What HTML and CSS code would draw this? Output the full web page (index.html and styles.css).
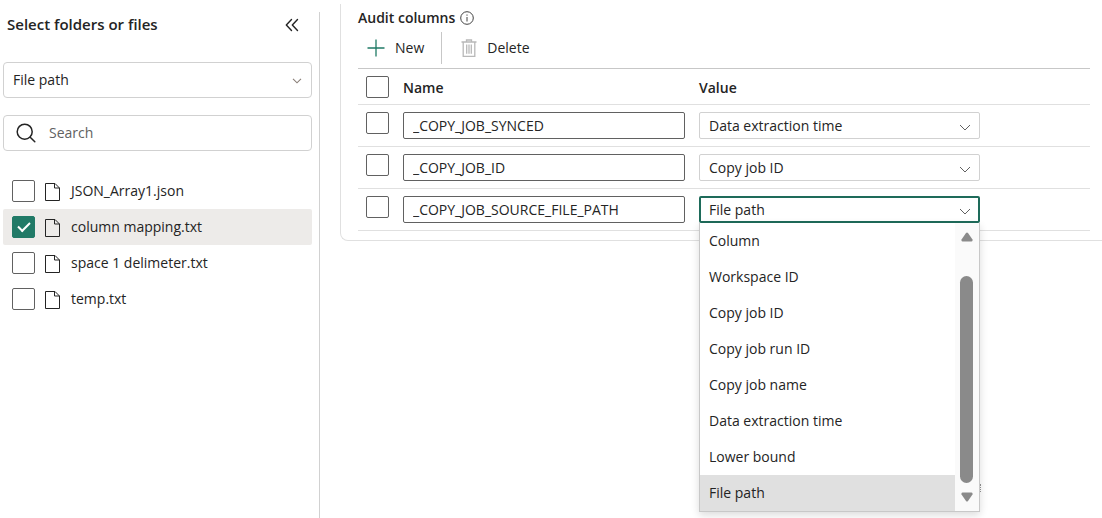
FILE: index.html
```html
<!DOCTYPE html>
<html lang="en">
<head>
<meta charset="utf-8">
<title>Copy job</title>
<link rel="stylesheet" href="styles.css">
</head>
<body>
<div class="layout">
  <aside class="sidebar">
    <header class="sidebar-head">
      <h2 class="title title-large">Select folders or files</h2>
      <button class="icon-button" type="button" aria-label="Collapse">
        <svg width="14" height="14" viewBox="0 0 14 14" fill="none" stroke="#242424" stroke-width="1.4" stroke-linecap="round" stroke-linejoin="round"><path d="M6.500 1.500 1.300 7l5.200 5.500M12.500 1.500 7.300 7l5.200 5.500"/></svg>
      </button>
    </header>
    <div class="field">
      <select class="field-control" aria-label="Path type"><option>File path</option></select>
      <svg class="chevron chevron-small" width="10" height="6" viewBox="0 0 10 6" fill="none" stroke="#8a7f78" stroke-width="1.1"><path d="M1 .8 5 4.800 9 .8"/></svg>
    </div>
    <div class="field search">
      <svg width="20" height="20" viewBox="0 0 20 20" fill="none" stroke="#242424" stroke-width="1.500" stroke-linecap="round"><circle cx="8.700" cy="8.700" r="7.500"/><path d="m14.200 14.200 4.600 4.600"/></svg>
      <input class="search-input" type="text" placeholder="Search" aria-label="Search">
    </div>
    <ul class="files">
      <li><label class="file"><input class="check" type="checkbox"><svg class="file-icon" width="15" height="18" viewBox="0 0 15 18" fill="#fff" stroke="#242424"><path d="M.5.5h9.500l4.500 4.500v12.500H.5z"/><path d="M9.500.5v4.500h5" fill="none"/></svg><span>JSON_Array1.json</span></label></li>
      <li><label class="file selected"><input class="check" type="checkbox" checked><svg class="file-icon" width="15" height="18" viewBox="0 0 15 18" fill="none" stroke="#242424"><path d="M.5.5h9.500l4.500 4.500v12.500H.5z"/><path d="M9.500.5v4.500h5"/></svg><span>column mapping.txt</span></label></li>
      <li><label class="file"><input class="check" type="checkbox"><svg class="file-icon" width="15" height="18" viewBox="0 0 15 18" fill="#fff" stroke="#242424"><path d="M.5.5h9.500l4.500 4.500v12.500H.5z"/><path d="M9.500.5v4.500h5" fill="none"/></svg><span>space 1 delimeter.txt</span></label></li>
      <li><label class="file"><input class="check" type="checkbox"><svg class="file-icon" width="15" height="18" viewBox="0 0 15 18" fill="#fff" stroke="#242424"><path d="M.5.5h9.500l4.500 4.500v12.500H.5z"/><path d="M9.500.5v4.500h5" fill="none"/></svg><span>temp.txt</span></label></li>
    </ul>
  </aside>
  <main class="main">
    <section class="panel">
      <div class="panel-head">
        <h2 class="title">Audit columns</h2>
        <svg width="14" height="14" viewBox="0 0 14 14" fill="none" stroke="#424242"><circle cx="7" cy="7" r="6.300"/><path d="M7 6v4.500M7 3.500v1.200"/></svg>
      </div>
      <div class="toolbar">
        <button class="tool tool-new" type="button">
          <svg width="18" height="18" viewBox="0 0 18 18" fill="none" stroke="#1f7a65" stroke-width="1.300"><path d="M9 .5v17M.5 9h17"/></svg>New
        </button>
        <button class="tool tool-delete" type="button">
          <svg width="16" height="18" viewBox="0 0 16 18" fill="none" stroke="#b8b8b8" stroke-width="1.300"><path d="M.5 3h15M5.500 3V1h5v2M2.200 3v14.300h11.600V3M5.700 5.500v9.300M8 5.500v9.300M10.300 5.500v9.300"/></svg>Delete
        </button>
      </div>
      <table class="grid">
        <thead>
          <tr><th class="col-check"><input class="check" type="checkbox" aria-label="Select all"></th><th class="col-name">Name</th><th>Value</th></tr>
        </thead>
        <tbody>
          <tr>
            <td><input class="check" type="checkbox" aria-label="Select row 1"></td>
            <td><input class="name" type="text" value="_COPY_JOB_SYNCED" aria-label="Name 1"></td>
            <td><div class="combo"><select class="value" aria-label="Value 1"><option>Data extraction time</option></select><svg class="chevron" width="12" height="7" viewBox="0 0 12 7" fill="none" stroke="#616161"><path d="M1 1l5 5 5-5"/></svg></div></td>
          </tr>
          <tr>
            <td><input class="check" type="checkbox" aria-label="Select row 2"></td>
            <td><input class="name" type="text" value="_COPY_JOB_ID" aria-label="Name 2"></td>
            <td><div class="combo"><select class="value" aria-label="Value 2"><option>Copy job ID</option></select><svg class="chevron" width="12" height="7" viewBox="0 0 12 7" fill="none" stroke="#616161"><path d="M1 1l5 5 5-5"/></svg></div></td>
          </tr>
          <tr>
            <td><input class="check" type="checkbox" aria-label="Select row 3"></td>
            <td><input class="name" type="text" value="_COPY_JOB_SOURCE_FILE_PATH" aria-label="Name 3"></td>
            <td>
              <div class="combo">
                <select class="value open" aria-label="Value 3"><option>File path</option></select><svg class="chevron" width="12" height="7" viewBox="0 0 12 7" fill="none" stroke="#616161"><path d="M1 1l5 5 5-5"/></svg>
                <div class="menu">
                  <ul class="options" role="listbox" aria-label="Value options">
                    <li role="option">Column</li>
                    <li role="option">Workspace ID</li>
                    <li role="option">Copy job ID</li>
                    <li role="option">Copy job run ID</li>
                    <li role="option">Copy job name</li>
                    <li role="option">Data extraction time</li>
                    <li role="option">Lower bound</li>
                    <li role="option" class="current" aria-selected="true">File path</li>
                  </ul>
                  <div class="scrollbar">
                    <svg width="12" height="10" viewBox="0 0 12 10" fill="#8a8a8a"><path d="M5 1.100Q6 0 7 1.100L11.500 7.500Q12 9.500 10.500 9.500H1.500Q0 9.500.5 7.500z"/></svg>
                    <div class="thumb"></div>
                    <svg width="12" height="10" viewBox="0 0 12 10" fill="#8a8a8a"><path d="M5 8.900Q6 10 7 8.900L11.500 2.500Q12 .5 10.500.5H1.500Q0 .5.5 2.500z"/></svg>
                  </div>
                </div>
              </div>
            </td>
          </tr>
        </tbody>
      </table>
    </section>
  </main>
</div>
</body>
</html>
```

FILE: styles.css
```css
* { box-sizing: border-box; }
body {
  margin: 0;
  background: #fff;
  color: #242424;
  font: 14px/20px "Open Sans", "Noto Sans", sans-serif;
}
input, select, button { font: inherit; color: inherit; margin: 0; }
ul { list-style: none; margin: 0; padding: 0; }
svg { display: block; flex: none; }

.layout { display: flex; min-height: 100vh; }
.title { margin: 0; font-size: 14px; font-weight: 600; line-height: 20px; }
.title-large { font-size: 15px; }

.sidebar {
  flex: 0 0 320px;
  margin-top: 12px;
  padding: 0 7px 0 3px;
  border-right: 1px solid #d1d1d1;
}
.sidebar-head {
  display: flex;
  justify-content: space-between;
  align-items: center;
  height: 24px;
  margin-bottom: 26px;
  padding: 0 13px 0 4px;
}
.icon-button { padding: 2px 0 0; border: 0; background: none; }
.field {
  position: relative;
  display: flex;
  align-items: center;
  height: 36px;
  margin-bottom: 17px;
  border: 1px solid #d1d1d1;
  border-radius: 4px;
}
.field-control, .value {
  appearance: none;
  width: 100%;
  padding: 0 9px;
  background: none;
  outline: 0;
}
.field-control { height: 100%; border: 0; }
.chevron {
  position: absolute;
  right: 9px;
  top: 12px;
  pointer-events: none;
}
.chevron-small { top: 15px; }
.search { gap: 13px; margin-bottom: 22px; padding: 0 12px; }
.search-input {
  flex: 1;
  min-width: 0;
  padding: 0;
  border: 0;
  outline: 0;
  background: none;
}
.search-input::placeholder { color: #616161; opacity: 1; }

.file {
  display: flex;
  align-items: center;
  height: 36px;
  padding: 0 9px;
  border-radius: 2px;
}
.file.selected { background: #edebe9; }
.file-icon { margin: 2px 11px 0 10px; }

.check {
  appearance: none;
  display: block;
  width: 23px;
  height: 22px;
  border: 1px solid #616161;
  border-radius: 2px;
  background: #fff;
}
.check:checked {
  border-color: #217a67;
  background: #217a67;
  display: grid;
  place-items: center;
}
.check:checked::before {
  content: "";
  width: 10px;
  height: 5px;
  margin-bottom: 3px;
  border: solid #fff;
  border-width: 0 0 2px 2px;
  transform: rotate(-45deg);
}

.main { flex: 1; min-width: 0; padding: 4px 0 0 20px; }
.panel {
  padding: 3px 12px 9px 17px;
  border: solid #e0e0e0;
  border-width: 0 0 1px 1px;
  border-bottom-left-radius: 8px;
}
.panel-head { display: flex; align-items: center; gap: 5px; height: 21px; }
.toolbar {
  display: flex;
  align-items: center;
  height: 41px;
  padding: 0 9px;
  border-bottom: 1px solid #c7c7c7;
}
.tool {
  display: flex;
  align-items: center;
  gap: 10px;
  height: 32px;
  padding: 0;
  border: 0;
  background: none;
}
.tool-new { padding-right: 17px; border-right: 1px solid #c7c7c7; }
.tool-delete { padding-left: 19px; }

.grid { width: 100%; border-collapse: separate; border-spacing: 0; table-layout: fixed; }
.grid th, .grid td {
  height: 42px;
  padding: 7px 0 0;
  border-bottom: 1px solid #e0e0e0;
  text-align: left;
  vertical-align: top;
  font-weight: 400;
}
.grid th { height: 36px; font-weight: 600; line-height: 24px; }
.grid .col-check { width: 45px; }
.grid .col-name { width: 296px; }
.grid .check { margin-left: 8px; }
.name, .value { display: block; height: 27px; border-radius: 2px; }
.name {
  width: calc(100% - 14px);
  padding: 0 9px;
  border: 1px solid #616161;
  background: #fff;
  outline: 0;
}
.combo { position: relative; max-width: 281px; }
.value { border: 1px solid #d1d1d1; }
.value.open { padding: 0 8px; border: 2px solid #1e6b5a; }

.menu {
  position: absolute;
  z-index: 1;
  top: 100%;
  left: 0;
  right: 0;
  display: flex;
  border: solid #c8c8c8;
  border-width: 0 1px 1px;
  background: #fff;
  box-shadow: 0 3px 8px rgba(0, 0, 0, .14);
}
.menu::after {
  content: "";
  position: absolute;
  left: 100%;
  bottom: 19px;
  width: 1px;
  height: 8px;
  border-right: 1px dotted #8a8a8a;
}
.options { flex: 1; }
.options li { height: 36px; padding: 8px 9px; }
.options .current { background: #e0e0e0; }
.scrollbar {
  display: flex;
  flex-direction: column;
  align-items: center;
  gap: 9px;
  width: 24px;
  padding: 9px 1px 9px 0;
  background: #fafafa;
}
.thumb { flex: 1; width: 13px; margin-top: 25px; border-radius: 7px; background: #8a8a8a; }
```
